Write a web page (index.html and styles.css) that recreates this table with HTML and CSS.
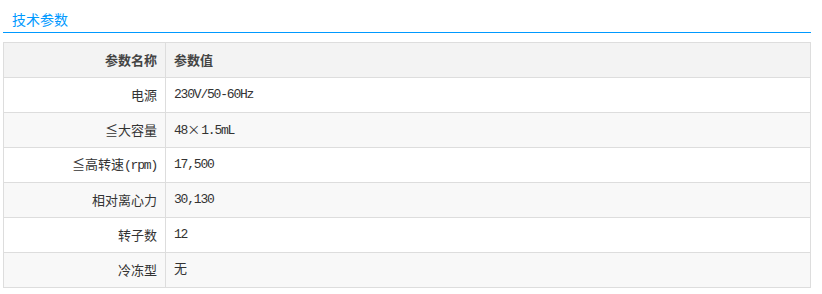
FILE: index.html
```html
<!DOCTYPE html>
<html lang="zh-CN">
<head>
<meta charset="utf-8">
<title>技术参数</title>
<link rel="stylesheet" href="styles.css">
</head>
<body>
<div class="wrap">
  <div class="title"><span>技术参数</span></div>
  <table class="spec">
    <colgroup><col class="c1"><col></colgroup>
    <thead>
      <tr><th class="k">参数名称</th><th class="v">参数值</th></tr>
    </thead>
    <tbody>
      <tr><td class="k">电源</td><td class="v">230V/50-60Hz</td></tr>
      <tr class="alt"><td class="k">≦大容量</td><td class="v">48<span class="cjk">×</span>1.5mL</td></tr>
      <tr><td class="k">≦高转速<span class="lat">(rpm)</span></td><td class="v">17,500</td></tr>
      <tr class="alt"><td class="k">相对离心力</td><td class="v">30,130</td></tr>
      <tr><td class="k">转子数</td><td class="v">12</td></tr>
      <tr class="alt"><td class="k">冷冻型</td><td class="v">无</td></tr>
    </tbody>
  </table>
</div>
</body>
</html>
```
FILE: styles.css
```css
html, body {
  margin: 0;
  padding: 0;
  background: #fff;
}
body {
  font-family: "Noto Sans CJK SC", "DejaVu Sans", sans-serif;
  font-size: 13px;
  color: #333;
}
.wrap {
  width: 808px;
  margin-left: 3px;
}
.title {
  height: 33px;
  border-bottom: 1px solid #0099ff;
  box-sizing: border-box;
  padding-left: 9px;
  display: flex;
  align-items: center;
}
.title span {
  color: #0099ff;
  font-size: 14px;
  line-height: 18px;
  margin-top: 6px;
}
.spec {
  margin-top: 9px;
  width: 808px;
  border-collapse: collapse;
  table-layout: fixed;
}
.spec col.c1 {
  width: 162px;
}
.spec th, .spec td {
  border: 1px solid #dddddd;
  height: 35px;
  padding: 0 8px;
  box-sizing: border-box;
  line-height: 16px;
  vertical-align: middle;
}
.spec thead th {
  background: #f3f3f3;
  font-weight: bold;
  color: #444;
}
.spec .k {
  text-align: right;
}
.spec .v {
  text-align: left;
}
.spec td.v, .spec .lat {
  font-family: "Liberation Mono", "Noto Sans CJK SC", monospace;
  letter-spacing: -1.2px;
}
.spec .cjk {
  font-family: "Noto Sans CJK SC", sans-serif;
  letter-spacing: 0;
  margin-right: 1px;
}
.spec tr.alt td {
  background: #f8f8f8;
}
```
